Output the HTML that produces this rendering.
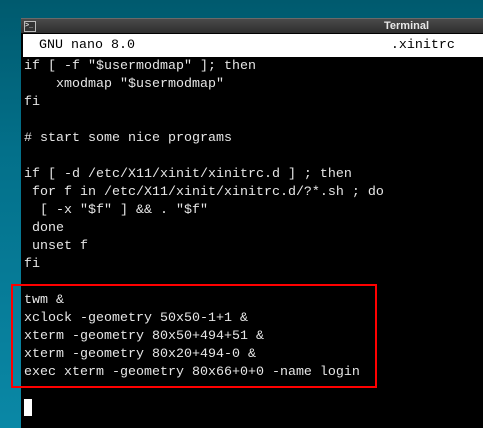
<!DOCTYPE html>
<html><head><style>
html,body{margin:0;padding:0;width:483px;height:428px;overflow:hidden;}
body{position:relative;background:linear-gradient(#005a6e 0px,#03708a 150px,#0a88a6 428px);font-family:"Liberation Mono","DejaVu Sans Mono",monospace;}
#win{position:absolute;left:21px;top:18px;width:470px;height:410px;background:#000;}
#title{position:absolute;left:0;top:0;width:100%;height:14px;background:linear-gradient(#4a4a4a,#2e2e2e);border-top:1px solid #6a6a6a;}
#icon{position:absolute;left:3px;top:2px;width:10px;height:9px;border:1px solid #bbb;background:#333;color:#ddd;font:bold 7px "Liberation Sans",sans-serif;line-height:8px;}
#tt{position:absolute;left:363px;top:1px;color:#e8e8e8;font:bold 11px "Liberation Sans",sans-serif;}
#hdr{position:absolute;left:2px;top:16px;width:470px;height:23px;background:#fff;color:#000;font-size:13.33px;line-height:23px;white-space:pre;}
pre{position:absolute;left:3px;top:40px;margin:0;color:#e6e6e6;font-size:13.33px;line-height:18px;font-family:inherit;}
#box{position:absolute;left:11px;top:284px;width:362px;height:100px;border:2.5px solid #f00;}
#cur{position:absolute;left:24px;top:399px;width:8px;height:17px;background:#fff;}
</style></head><body>
<div id="win">
<div id="title"><div id="icon">&gt;_</div><div id="tt">Terminal</div></div>
<div id="hdr">  GNU nano 8.0                                .xinitrc</div>
<pre>if [ -f "$usermodmap" ]; then
    xmodmap "$usermodmap"
fi

# start some nice programs

if [ -d /etc/X11/xinit/xinitrc.d ] ; then
 for f in /etc/X11/xinit/xinitrc.d/?*.sh ; do
  [ -x "$f" ] &amp;&amp; . "$f"
 done
 unset f
fi

twm &amp;
xclock -geometry 50x50-1+1 &amp;
xterm -geometry 80x50+494+51 &amp;
xterm -geometry 80x20+494-0 &amp;
exec xterm -geometry 80x66+0+0 -name login</pre>
</div>
<div id="box"></div>
<div id="cur"></div>
</body></html>
